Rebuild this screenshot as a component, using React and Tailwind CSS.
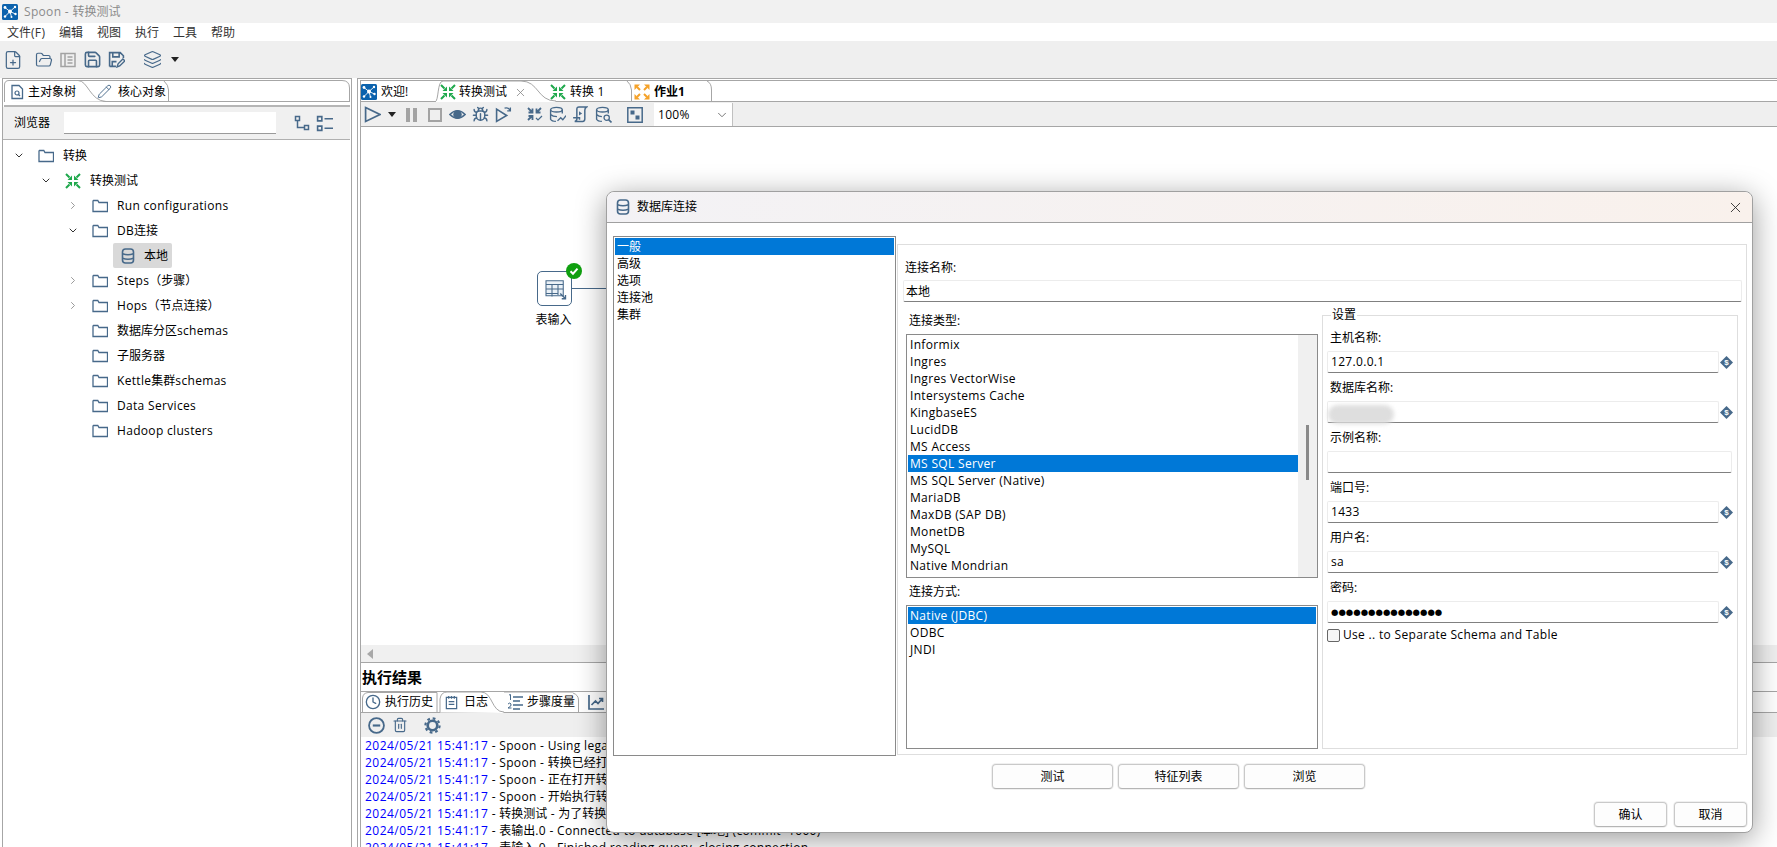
import { Bug, ChevronDown, ChevronRight, Clock, FilePlus, FolderOpen, Layers, Pencil, Save, Trash2, X } from 'lucide-react'

const BLUE = '#47698a'

// ascii runs are set a little wider than the CJK ones, like the hinted UI font in the screenshot
const T = ({ children }) =>
	String(children)
		.split(/([\x00-\x7f]+)/)
		.map((part, i) =>
			i % 2 === 1 ? (
				<span key={i} className="tracking-[0.32px]">{part}</span>
			) : (
				part
			),
		)

const Svg = ({ size = 16, className = '', children }) => (
	<svg width={size} height={size} viewBox="0 0 16 16" fill="none" stroke={BLUE} className={`shrink-0 ${className}`}>
		{children}
	</svg>
)

const Folder = () => (
	<Svg>
		<path d="M1 3v10.500h14.500V4.500H7L5.800 2.500H1.500z" strokeWidth="1.300" />
	</Svg>
)

const TransIcon = ({ size = 16 }) => (
	<Svg size={size}>
		<g stroke="#1fa84c" strokeWidth="2">
			<path d="M1 1l3.500 3.500M15 1l-3.500 3.500M1 15l3.500-3.500M15 15l-3.500-3.500" />
		</g>
		<g fill="#1fa84c" stroke="none">
			<path d="M7 7H2.500L7 2.500z" />
			<path d="M9 7h4.500L9 2.500z" />
			<path d="M7 9H2.500L7 13.500z" />
			<path d="M9 9h4.500L9 13.500z" />
		</g>
	</Svg>
)

const JobIcon = () => (
	<Svg>
		<g stroke="#f5a229" strokeWidth="2">
			<path d="M3 3l3 3M13 3l-3 3M3 13l3-3M13 13l-3-3" />
		</g>
		<g fill="#f5a229" stroke="none">
			<path d="M0.500 0.500h5.500L0.500 6z" />
			<path d="M15.500 0.500H10L15.500 6z" />
			<path d="M0.500 15.500h5.500L0.500 10z" />
			<path d="M15.500 15.500H10L15.500 10z" />
		</g>
	</Svg>
)

const SpoonLogo = () => (
	<svg width="16" height="16" viewBox="0 0 16 16" className="shrink-0">
		<rect width="16" height="16" rx="1.500" fill="#0b62ad" />
		<g stroke="#fff" strokeWidth="0.900">
			<path d="M3 3.500l5 4M13 3l-5 4.500M8 7.500l-5 5M8 7.500l5.500 2.500M8 7.500l1.500 5.500" />
		</g>
		<g fill="#fff">
			<circle cx="3" cy="3.500" r="1.400" />
			<circle cx="13" cy="3" r="1.200" />
			<circle cx="8" cy="7.500" r="2" />
			<circle cx="3" cy="12.500" r="1.200" />
			<circle cx="13.500" cy="10" r="1.200" />
			<circle cx="9.500" cy="13" r="1" />
		</g>
	</svg>
)

const DbIcon = () => (
	<Svg>
		<rect x="2.500" y="1" width="11" height="14" rx="3" strokeWidth="1.600" />
		<path d="M2.500 5.700q5.500 2 11 0M2.500 10.300q5.500 2 11 0" strokeWidth="1.500" />
	</Svg>
)

const VarIcon = () => (
	<svg width="13" height="13" viewBox="0 0 13 13" className="shrink-0">
		<path d="M6.500 0L13 6.500 6.500 13 0 6.500z" fill={BLUE} />
		<text x="6.500" y="9.300" textAnchor="middle" fontSize="8" fontWeight="700" fill="#fff" fontFamily="Liberation Sans">$</text>
	</svg>
)

const Caret = ({ className = '' }) => (
	<div className={`w-0 h-0 border-l-[4px] border-r-[4px] border-t-[5px] border-l-transparent border-r-transparent border-t-[#222] ${className}`} />
)

const treeRows = [
	{ label: '转换', level: 0, arrow: 'down' },
	{ label: '转换测试', level: 1, arrow: 'down', icon: 'trans' },
	{ label: 'Run configurations', level: 2, arrow: 'right' },
	{ label: 'DB连接', level: 2, arrow: 'down' },
	{ label: '本地', level: 3 },
	{ label: 'Steps（步骤）', level: 2, arrow: 'right' },
	{ label: 'Hops（节点连接）', level: 2, arrow: 'right' },
	{ label: '数据库分区schemas', level: 2 },
	{ label: '子服务器', level: 2 },
	{ label: 'Kettle集群schemas', level: 2 },
	{ label: 'Data Services', level: 2 },
	{ label: 'Hadoop clusters', level: 2 },
]
const levelPad = ['pl-[10px]', 'pl-[37px]', 'pl-[64px]']

const logLines = [
	'Spoon - Using legacy execution engine',
	'Spoon - 转换已经打开.',
	'Spoon - 正在打开转换 [转换测试]...',
	'Spoon - 开始执行转换.',
	'转换测试 - 为了转换解除补丁开始 [转换测试]',
	'表输出.0 - Connected to database [本地] (commit=1000)',
	'表输入.0 - Finished reading query, closing connection',
]

const dbTypes = ['Informix', 'Ingres', 'Ingres VectorWise', 'Intersystems Cache', 'KingbaseES', 'LucidDB', 'MS Access', 'MS SQL Server', 'MS SQL Server (Native)', 'MariaDB', 'MaxDB (SAP DB)', 'MonetDB', 'MySQL', 'Native Mondrian']

const ListRow = ({ text, active, className = '' }) => (
	<div className={`h-[17px] leading-[17px] pl-[2px] whitespace-nowrap ${active ? 'bg-[#0078d7] text-white' : ''} ${className}`}><T>{text}</T></div>
)

const Field = ({ label, value, variable = true, children }) => (
	<div className="mb-[6px]">
		<div className="h-[16px] leading-[18px] ml-[3px] mb-[6px]">{label}</div>
		<div className="flex items-center h-[22px]">
			<div className={`relative h-[22px] ${variable ? 'w-[392px]' : 'w-[405px]'} border border-[#ececec] border-b-[#808080] rounded-[2px] pl-[3px] leading-[20px] bg-white`}>
				{value && <T>{value}</T>}
				{children}
			</div>
			{variable && <div className="ml-[1px]"><VarIcon /></div>}
		</div>
	</div>
)

const Btn = ({ text, className = '' }) => (
	<div className={`h-[25px] leading-[23px] text-center bg-[#fdfdfd] border border-[#c9c9c9] border-b-[#b5b5b5] rounded-[4px] shadow-[0_0_0_1px_#f0f0f0] ${className}`}>{text}</div>
)

const App = () => {
	return (
		<div className="relative w-[1777px] h-[847px] overflow-hidden bg-white text-[12px] text-black font-['Open_Sans','Noto_Sans_CJK_SC',sans-serif]">
			{/* title bar */}
			<div className="h-[23px] bg-[#f1f1f1] flex items-center pl-[2px]">
				<SpoonLogo />
				<span className="ml-[6px] pt-[1px] text-[#8b8b8b]"><T>Spoon - 转换测试</T></span>
			</div>
			{/* menu */}
			<div className="h-[18px] bg-white flex items-center pl-[7px] pt-[1px] text-[#333]">
				<span className="w-[52px]"><T>文件(F)</T></span>
				<span className="w-[38px]">编辑</span>
				<span className="w-[38px]">视图</span>
				<span className="w-[38px]">执行</span>
				<span className="w-[38px]">工具</span>
				<span>帮助</span>
			</div>
			{/* main toolbar */}
			<div className="h-[37px] bg-[#efefef] flex items-center pl-[3px]">
				<FilePlus size={20} color={BLUE} strokeWidth={1.5} />
				<FolderOpen size={18} color={BLUE} strokeWidth={1.6} className="ml-[12px]" />
				<Svg size={16} className="ml-[7px]">
					<path d="M1 1.500h14v13H1zM5 1.500v13M7.500 5h5M7.500 8h5M7.500 11h5" stroke="#a3a3a3" strokeWidth="1.500" />
				</Svg>
				<Save size={19} color={BLUE} strokeWidth={2} className="ml-[7px]" />
				<Svg size={17} className="ml-[6px]">
					<path d="M1.500 14.500v-13h10l3 3v2M1.500 14.500h6M4.500 1.500v4h6v-4M4 14v-4h4" strokeWidth="1.500" />
					<path d="M8.500 15l1-3 4.500-4.500 1.800 1.800L11 14z" strokeWidth="1.300" />
				</Svg>
				<Layers size={19} color={BLUE} strokeWidth={1.5} className="ml-[18px]" />
				<Caret className="ml-[9px]" />
			</div>

			<div className="flex h-[769px]">
				{/* left panel */}
				<div className="ml-[2px] w-[350px] h-[769px] border border-b-0 border-[#a6a6a6] flex flex-col">
					<div className="relative shrink-0 mt-[1px] mx-[1px] h-[22px] flex border-b border-[#a6a6a6]">
						<svg width="346" height="22" className="absolute left-0 top-0" fill="none" stroke="#a6a6a6">
							<path d="M0.500 22V5Q0.500 0.500 5 0.500H74C84 0.500 86 21 102 21.500" fill="#fff" />
							<path d="M74 0.500H338Q345.500 0.500 345.500 8V22" />
							<path d="M164.500 21V10Q164.500 5 160 1" />
						</svg>
						<div className="relative flex items-center w-[91px] pl-[5px] pt-[2px]">
							<Svg size={16}>
								<path d="M3 1.500h7l3.500 3.500v9.500H3z" strokeWidth="1.300" />
								<circle cx="8" cy="9" r="2" strokeWidth="1.200" />
								<path d="M9.500 10.500L11 12" strokeWidth="1.200" />
							</Svg>
							<span className="ml-[3px]">主对象树</span>
						</div>
						<div className="relative flex items-center pl-[2px] pt-[2px]">
							<Pencil size={15} color={BLUE} strokeWidth={1.5} />
							<span className="ml-[6px]">核心对象</span>
						</div>
					</div>
					<div className="h-[5px] shrink-0 border-b-2 border-[#b5b5b5] mx-[1px]" />
					<div className="h-[33px] shrink-0 bg-[#f0f0f0] border-b border-[#b0b0b0] flex items-center mr-[1px]">
						<span className="ml-[11px] w-[50px]">浏览器</span>
						<div className="w-[212px] h-[22px] bg-white border-b border-[#9a9a9a]" />
						<Svg size={16} className="ml-[18px]">
							<path d="M1.500 1.500h4v4h-4zM10.500 10.500h4v4h-4zM3.500 5.500v7h7" strokeWidth="1.500" />
						</Svg>
						<Svg size={17} className="ml-[6px]">
							<path d="M1.500 1.500h4v4h-4zM1.500 10.500h4v4h-4zM8 3.500h8M8 12.500h8" strokeWidth="1.500" />
						</Svg>
					</div>
					{/* tree */}
					<div className="pt-[3px]">
						{treeRows.map((row) =>
							row.level === 3 ? (
								<div key={row.label} className="h-[25px] flex pl-[110px]">
									<div className="w-[59px] h-[25px] bg-[#d9d9d9] rounded-[2px] flex items-center pl-[7px]">
										<DbIcon />
										<span className="ml-[8px]">{row.label}</span>
									</div>
								</div>
							) : (
								<div key={row.label} className={`h-[25px] flex items-center ${levelPad[row.level]}`}>
									<div className="w-[12px] flex justify-center">
										{row.arrow === 'down' && <ChevronDown size={15} color="#333" strokeWidth={2} />}
										{row.arrow === 'right' && <ChevronRight size={15} color="#9a9a9a" strokeWidth={2} />}
									</div>
									<div className="ml-[13px]">{row.icon === 'trans' ? <TransIcon /> : <Folder />}</div>
									<span className="ml-[9px] whitespace-nowrap"><T>{row.label}</T></span>
								</div>
							),
						)}
					</div>
				</div>

				{/* right panel */}
				<div className="ml-[5px] flex-1 h-[769px] border-l border-t border-[#a6a6a6] pl-[2px] pt-[1px]">
					<div className="h-[768px] border-l border-[#a6a6a6] flex flex-col">
						<div className="relative shrink-0 h-[22px] border-t border-b border-[#a6a6a6] flex">
							<svg width="360" height="22" className="absolute left-0 -top-[1px]" fill="none" stroke="#a6a6a6">
								<path d="M74 22C78 21 76 1 82 1H160C178 1 176 21 195 21V22" fill="#fff" />
								<path d="M195 21.500H262V21.500M266 1Q270 4 270.500 10V21.500M346 1Q350.500 3 350.500 10V21.500" />
							</svg>
							<div className="relative w-[75px] flex items-center pt-[2px]">
								<SpoonLogo />
								<span className="ml-[4px]"><T>欢迎!</T></span>
							</div>
							<div className="relative w-[104px] flex items-center pl-[4px] pt-[2px]">
								<TransIcon />
								<span className="ml-[3px]">转换测试</span>
								<X size={13} color="#888" strokeWidth={1.5} className="ml-[7px]" />
							</div>
							<div className="relative w-[91px] flex items-center pl-[10px] pt-[2px]">
								<TransIcon />
								<span className="ml-[4px]"><T>转换 1</T></span>
							</div>
							<div className="relative w-[81px] flex items-center pl-[3px] pt-[2px]">
								<JobIcon />
								<span className="ml-[4px] font-bold">作业1</span>
							</div>
						</div>
						{/* transformation toolbar */}
						<div className="h-[25px] shrink-0 bg-[#efefef] border-b border-[#a6a6a6] flex items-center pl-[3px] pt-[1px]">
							<Svg size={17}>
								<path d="M1.500 1.500L15 8 1.500 14.500z" strokeWidth="1.600" />
							</Svg>
							<Caret className="ml-[7px]" />
							<div className="ml-[10px] flex gap-[3px]">
								<div className="w-[4px] h-[14px] bg-[#a3a3a3]" />
								<div className="w-[4px] h-[14px] bg-[#a3a3a3]" />
							</div>
							<div className="ml-[11px] w-[14px] h-[14px] border-2 border-[#a3a3a3]" />
							<Svg size={17} className="ml-[7px]">
								<path d="M0.800 8Q8 1 15.200 8 8 15 0.800 8z" strokeWidth="1.500" />
								<circle cx="8" cy="8" r="3.500" fill={BLUE} />
							</Svg>
							<Bug size={17} color={BLUE} strokeWidth={2} className="ml-[6px]" />
							<Svg size={17} className="ml-[6px]">
								<path d="M1.500 3L11 9 1.500 14.500z" strokeWidth="1.500" />
								<path d="M9 2q4-1 5 2M14.500 1.500V4.500H11.500" strokeWidth="1.200" />
							</Svg>
							<div className="ml-[15px]">
								<Svg size={16}>
									<g strokeWidth="1.800">
										<path d="M1 1l4 4M5.500 1.500v4h-4M14 1l-4 4M9.500 1.500v4h4M1 13l4-4M5.500 13V9h-4" />
									</g>
									<path d="M9 11l2 2 4-4" strokeWidth="1.200" />
								</Svg>
							</div>
							<Svg size={17} className="ml-[6px]">
								<ellipse cx="7" cy="3.500" rx="5.500" ry="2.200" strokeWidth="1.300" />
								<path d="M1.500 3.500v9q1 2 5 2M12.500 3.500V7M1.500 8q2 2 6 2" strokeWidth="1.300" />
								<path d="M8 14l3-3 2 2 3-4" strokeWidth="1.300" />
							</Svg>
							<Svg size={17} className="ml-[5px]">
								<path d="M3.500 14.500Q6 14 5.500 11V3q0-2 2-2h7q-1.500 1-1.500 3v8q0 2.500-2 2.500zM2 11h6v2" strokeWidth="1.400" />
								<path d="M7.500 5l3 2-3 2z" fill={BLUE} stroke="none" />
							</Svg>
							<Svg size={17} className="ml-[7px]">
								<ellipse cx="7" cy="3.500" rx="5.500" ry="2.200" strokeWidth="1.300" />
								<path d="M1.500 3.500v9q1 2 5 2M12.500 3.500V7M1.500 8q2 2 5 2" strokeWidth="1.300" />
								<circle cx="11" cy="11" r="2.500" strokeWidth="1.200" />
								<path d="M13 13l2.500 2.500" strokeWidth="1.500" />
							</Svg>
							<Svg size={16} className="ml-[15px]">
								<path d="M0.800 0.800h14.400v14.400H0.800z" strokeWidth="1.500" />
								<path d="M3.500 3.500h4v4h-4zM8.500 8.500h4v4h-4z" fill={BLUE} stroke="none" />
							</Svg>
							<div className="ml-[11px] w-[79px] h-[23px] bg-white border-r border-[#c0c0c0] flex items-center justify-between pl-[4px] pr-[3px]">
								<span className="tracking-[0.32px]">100%</span>
								<ChevronDown size={14} color="#666" strokeWidth={1.5} />
							</div>
						</div>
						{/* canvas */}
						<div className="relative h-[518px] shrink-0">
							<div className="absolute left-[176px] top-[144px] w-[35px] h-[35px] bg-white border border-[#47698a] rounded-[5px] flex items-center justify-center">
								<Svg size={24}>
									<path d="M2 2.500h11.500v10H2z" strokeWidth="0.700" fill="#eaf1f7" />
									<path d="M2 5h11.500M2 8h11.500M2 11h8M6 5v8M10 5v7" strokeWidth="0.700" />
									<path d="M11.500 11l3 3M15 12v2.500h-2.500" strokeWidth="0.900" />
								</Svg>
							</div>
							<div className="absolute left-[205px] top-[136px] w-[16px] h-[16px] rounded-full bg-[#10a010] flex items-center justify-center">
								<svg width="10" height="10" viewBox="0 0 10 10" fill="none" stroke="#fff" strokeWidth="2">
									<path d="M1.500 5.200l2.500 2.500 4.500-5" />
								</svg>
							</div>
							<div className="absolute left-[211px] top-[161px] w-[40px] h-px bg-[#47698a]" />
							<div className="absolute left-[174px] top-[184px] w-[37px] text-center whitespace-nowrap">表输入</div>
						</div>
						{/* horizontal scroll */}
						<div className="h-[18px] shrink-0 bg-[#f0f0f0] border-b border-[#a6a6a6] flex items-center pl-[6px]">
							<div className="w-0 h-0 border-t-[5px] border-b-[5px] border-r-[6px] border-t-transparent border-b-transparent border-r-[#a8a8a8]" />
						</div>
						{/* results */}
						<div className="h-[28px] shrink-0 flex items-center pl-[1px] text-[15px] font-bold">执行结果</div>
						<div className="relative shrink-0 h-[22px] border-t border-b border-[#a6a6a6] flex">
							<svg width="240" height="22" className="absolute left-0 -top-[1px]" fill="none" stroke="#a6a6a6">
								<path d="M1.500 21V7Q2 2 7 1.500H76V21" />
								<path d="M79 21.500V8Q80 1 86 1H120C132 1 130 21 143 21V22" fill="#fff" />
								<path d="M143 21.500H214M212 2Q217.500 4 217.500 9V21.500" />
								<path d="M143 1H212" />
							</svg>
							<div className="relative w-[79px] flex items-center pl-[4px]">
								<Clock size={16} color={BLUE} strokeWidth={2} />
								<span className="ml-[4px]">执行历史</span>
							</div>
							<div className="relative w-[65px] flex items-center pl-[4px]">
								<Svg size={15}>
									<path d="M2.500 2.500h11v12h-11zM5 1v3M8 1v3M11 1v3M5 7h6M5 10h6" strokeWidth="1.300" />
								</Svg>
								<span className="ml-[5px]">日志</span>
							</div>
							<div className="relative w-[79px] flex items-center pl-[2px]">
								<Svg size={16}>
									<path d="M6 3h10M6 7h7M6 11h10M6 15h7" strokeWidth="1.300" />
									<path d="M2 1l1.500-.5v5.500" strokeWidth="1" />
									<path d="M1 10q2-2 3 0t-3 4h3.500" strokeWidth="1" />
								</Svg>
								<span className="ml-[4px]">步骤度量</span>
							</div>
							<div className="relative flex items-center pl-[4px]">
								<Svg size={16}>
									<path d="M1 1v14h15M3.500 11l4-4 2.500 2.500L14 5M11 4.500h3.500V8" strokeWidth="1.700" />
								</Svg>
								<span className="ml-[4px]">性能图</span>
							</div>
						</div>
						<div className="h-[24px] shrink-0 bg-[#efefef] flex items-center pl-[7px]">
							<Svg size={17}>
								<circle cx="8" cy="8" r="7" strokeWidth="1.700" />
								<path d="M4.500 8h7" strokeWidth="2" />
							</Svg>
							<Trash2 size={16} color={BLUE} strokeWidth={1.7} className="ml-[7px]" />
							<Svg size={17} className="ml-[16px]">
								<circle cx="8" cy="8" r="4.500" strokeWidth="2.500" />
								<circle cx="8" cy="8" r="6.700" strokeWidth="2" strokeDasharray="2.600 2.660" />
							</Svg>
						</div>
						<div className="pl-[4px] shrink-0">
							{logLines.map((line, i) => (
								<div key={i} className="h-[17px] leading-[17px] whitespace-nowrap">
									<span className="text-[#0000ff] tracking-[0.47px]">2024/05/21 15:41:17</span><T>{` - ${line}`}</T>
								</div>
							))}
						</div>
					</div>
				</div>
			</div>

			{/* dialog */}
			<div className="absolute left-[606px] top-[191px] w-[1147px] h-[642px] bg-white border border-[#a0a0a0] rounded-t-[8px] rounded-b-[8px] shadow-[0_6px_30px_rgba(0,0,0,0.4)] flex flex-col">
				<div className="h-[31px] shrink-0 border-b border-[#a0a0a0] rounded-t-[8px] bg-linear-to-r from-[#f3f2f5] to-[#f9f1ec] flex items-center pl-[8px]">
					<DbIcon />
					<span className="ml-[6px]">数据库连接</span>
					<X size={17} color="#222" strokeWidth={1.2} className="ml-auto mr-[8px]" />
				</div>
				<div className="flex pl-[6px] pt-[13px]">
					{/* categories */}
					<div className="w-[283px] h-[520px] border border-[#8a8a8a] p-[1px]">
						{['一般', '高级', '选项', '连接池', '集群'].map((c, i) => (
							<ListRow key={c} text={c} active={i === 0} />
						))}
					</div>
					{/* general tab */}
					<div className="ml-[1px] mt-[8px] w-[850px] h-[511px] border border-[#dedede] pl-[5px] pr-[4px] pt-[13px]">
						<div className="h-[16px] leading-[19px] ml-[2px]">连接名称:</div>
						<div className="mt-[6px] h-[22px] border border-[#ececec] border-b-[#808080] rounded-[2px] pl-[2px] leading-[21px]">本地</div>
						<div className="flex pl-[3px]">
							<div className="w-[412px] mt-[11px]">
								<div className="h-[16px] leading-[16px] ml-[3px]">连接类型:</div>
								<div className="mt-[5px] h-[244px] border border-[#8a8a8a] p-[1px] relative overflow-hidden">
									<div className="w-[391px]">
										{dbTypes.map((d) => (
											<ListRow key={d} text={d} active={d === 'MS SQL Server'} />
										))}
									</div>
									<div className="absolute right-0 top-0 bottom-0 w-[19px] bg-[#f0f0f0] flex justify-center">
										<div className="mt-[90px] w-[3px] h-[55px] bg-[#8a8a8a]" />
									</div>
								</div>
								<div className="mt-[6px] h-[16px] leading-[16px] ml-[3px]">连接方式:</div>
								<div className="mt-[5px] h-[144px] border border-[#8a8a8a] p-[1px]">
									{['Native (JDBC)', 'ODBC', 'JNDI'].map((m, i) => (
										<ListRow key={m} text={m} active={i === 0} />
									))}
								</div>
							</div>
							<div className="relative ml-[4px] mt-[13px] w-[416px] h-[434px] border border-[#dedede] pl-[4px] pt-[13px]">
								<span className="absolute -top-[9px] left-[8px] bg-white px-[1px] leading-[16px]">设置</span>
								<Field label="主机名称:" value="127.0.0.1" />
								<Field label="数据库名称:">
									<div className="absolute left-0 top-[3px] w-[66px] h-[19px] bg-[#dedede] rounded-full blur-[2px]" />
								</Field>
								<Field label="示例名称:" variable={false} />
								<Field label="端口号:" value="1433" />
								<Field label="用户名:" value="sa" />
								<Field label="密码:">
									<span className="absolute left-[3px] top-0 text-[8.5px] leading-[20px] font-['DejaVu_Sans',sans-serif]">●●●●●●●●●●●●●●●</span>
								</Field>
								<div className="-mt-[1px] h-[14px] flex items-center">
									<div className="w-[13px] h-[13px] border border-[#666] rounded-[2px] bg-[#f6f6f6]" />
									<span className="ml-[3px]"><T>Use .. to Separate Schema and Table</T></span>
								</div>
							</div>
						</div>
					</div>
				</div>
				<div className="mt-[8px] pl-[385px] flex gap-[5px]">
					<Btn text="测试" className="w-[121px]" />
					<Btn text="特征列表" className="w-[121px]" />
					<Btn text="浏览" className="w-[121px]" />
				</div>
				<div className="mt-[13px] pr-[5px] flex justify-end gap-[7px]">
					<Btn text="确认" className="w-[73px]" />
					<Btn text="取消" className="w-[73px]" />
				</div>
			</div>
		</div>
	)
}

export default App
